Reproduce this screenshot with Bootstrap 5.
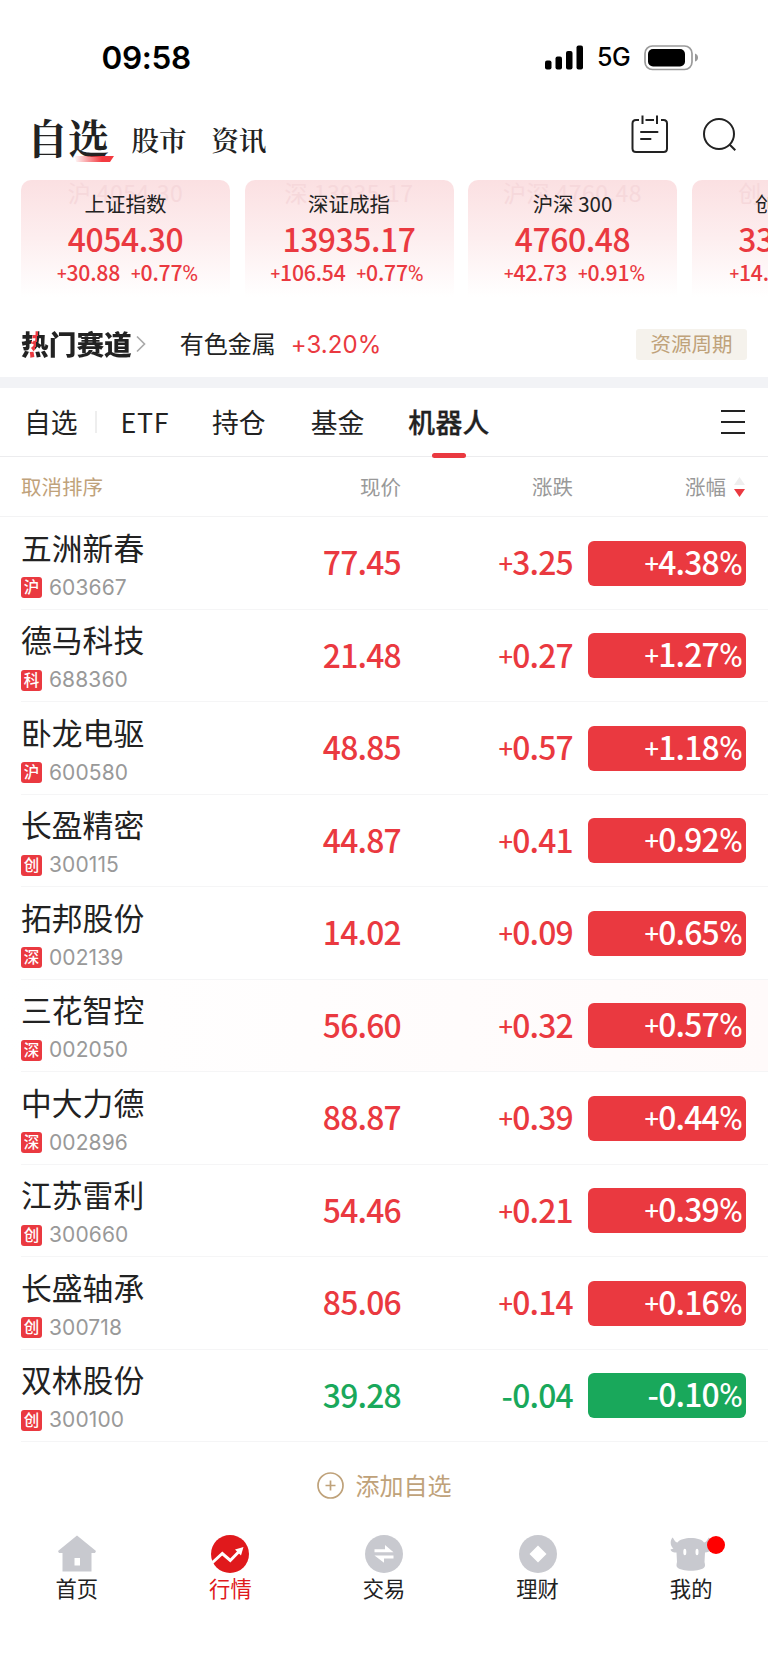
<!DOCTYPE html>
<html lang="zh-CN">
<head>
<meta charset="utf-8">
<meta name="viewport" content="width=device-width, initial-scale=1">
<title>自选行情</title>
<link href="https://cdn.jsdelivr.net/npm/bootstrap@5.3.0/dist/css/bootstrap.min.css" rel="stylesheet">
<style>
:root{--up:#ea3940;--down:#19a85b;--ink:#222;--gold:#bfa27a;--cjk:"Noto Sans CJK SC",sans-serif}
body{font-family:var(--cjk);color:var(--ink);width:768px;height:1669px;overflow:hidden;background:#fff}
.num{font-family:var(--cjk);font-weight:500}
.up{color:var(--up)}
.down{color:var(--down)}
.statusbar{height:100px;padding:15px 69px 0 101.5px;color:#000;font-family:Inter,var(--cjk)}
.clock{font-size:31.5px;font-weight:600;letter-spacing:-.3px}
.net{font-size:25px;font-weight:500;margin:1px 14px 0 13px;letter-spacing:-.6px}
.topnav{height:80px;padding:0 30.5px 0 27px;font-family:"Noto Serif CJK SC","Noto Sans CJK SC",serif}
.top-main{font-size:41px;font-weight:700;line-height:56px;margin-top:9px}
.top-sub{font-size:27.6px;font-weight:600;line-height:56px;margin-top:11px}
.swoosh{right:-5px;bottom:3px;width:40px;height:6px;background:linear-gradient(90deg,#fff0,#f33a40 70%);clip-path:polygon(0 0,100% 0,90% 100%,6% 100%)}
.indices{height:117px;padding-left:21px;gap:14.5px}
.index-card{flex:0 0 209px;height:117px;border-radius:10px 10px 0 0;background:linear-gradient(#fbe0e2,#fdeeef 50%,#fff);overflow:hidden}
.index-card .ghost{left:0;right:0;top:0;line-height:24px;font-size:23px;letter-spacing:.5px;color:#f6d8db}
.index-name{font-size:20.5px;line-height:24px;padding-top:11px;color:#222}
.index-value{font-size:31.8px;line-height:34px;margin-top:6px;letter-spacing:-.4px}
.index-change{font-size:21.2px;line-height:24px;margin-top:5px;gap:11px;letter-spacing:-.2px}
.pl{font-size:.8em;line-height:1;vertical-align:.07em}
.pc{font-family:Roboto,sans-serif;font-weight:400;font-size:1.02em;line-height:1}
.hotline{height:80px;padding:13px 21px 0 21px}
.hot-title{font-size:27.7px;font-weight:900;line-height:34px;margin-top:-1px;background:linear-gradient(100deg,#222 13px,var(--up) 13px,var(--up) 18px,#222 18px);-webkit-background-clip:text;background-clip:text;color:transparent}
.hot-name{font-size:24px;margin-left:34px;margin-top:-1px}
.hot-rise{font-family:Inter,sans-serif;font-size:24px;margin:2px 0 0 15px;letter-spacing:.1px}
.hot-tag{width:111px;height:31px;line-height:29px;font-size:20.5px;margin-top:1px;border-radius:3px;background:#f5f2ec;color:var(--gold)}
.divider-band{height:11px;background:#f2f3f6}
.tabs{height:69px;border-bottom:1px solid #ececee;font-size:26.8px;padding:0 23px 0 24px}
.tabs span{line-height:68px}
.tab-on{font-weight:500;letter-spacing:.4px;-webkit-text-stroke:.3px #222}
.tab-sep{width:2px;height:22px;background:#eee}
.tab-bar{left:24px;bottom:-2px;width:34px;height:5px;border-radius:3px;background:var(--up)}
.colhead,.stock{display:grid;grid-template-columns:200px 180px 172px 15px 158px;padding-left:21px;align-items:center}
.colhead{height:60px;border-bottom:1px solid #f3f3f4;font-size:20.5px;color:#999}
.gold{color:var(--gold)}
.stock{height:92.5px;position:relative}
.stock::after{content:"";position:absolute;left:21px;right:0;bottom:0;height:1px;background:#f5f5f6}
.stock.flash{background:linear-gradient(90deg,#fff,#fffafa)}
.stock-name{font-size:30.8px;line-height:36px;margin:2px 0 11px}
.mk{width:21px;height:21px;border-radius:3px;background:var(--up);color:#fff;font-size:15.5px;line-height:19px;text-align:center;font-weight:500}
.code{font-family:Inter,sans-serif;font-size:21px;line-height:24px;color:#999;margin-left:7px;letter-spacing:.1px}
.price,.chg,.pct{font-size:31.8px;line-height:44px;text-align:right;padding-bottom:4px;letter-spacing:-.75px}
.pct{grid-column:5;height:45px;border-radius:6px;background:var(--up);color:#fff;padding-right:4px;line-height:41px}
.pct.down{background:var(--down)}
.addrow{height:88px;font-size:24px;gap:12px;color:var(--gold);padding-bottom:2px}
.bottomnav{height:139px}
.bottomnav>div{width:153.6px;font-size:21.3px;line-height:30px;padding-top:4px}
.bottomnav svg{display:block;margin:0 auto -1px}
.dot{width:18px;height:18px;border-radius:50%;background:#f00;left:92.500px;top:6px}
</style>
</head>
<body>
<header class="statusbar d-flex align-items-center">
  <span class="clock">09:58</span>
  <svg class="ms-auto" width="39" height="26" viewBox="0 0 39 26"><rect x="0" y="15.500" width="6.500" height="9" rx="2"/><rect x="10.500" y="11.500" width="6.500" height="13" rx="2"/><rect x="21" y="6" width="6.500" height="18.500" rx="2"/><rect x="31.500" y="0.500" width="6.500" height="24" rx="2"/></svg>
  <span class="net">5G</span>
  <svg width="55" height="26" viewBox="0 0 55 26"><rect x="1" y="1" width="47" height="23.500" rx="7.500" fill="none" stroke="#9a9a9a" stroke-width="1.700"/><rect x="4" y="4" width="37" height="17.500" rx="5"/><path d="M51 8.500q3 1 3 4t-3 4z" fill="#999"/></svg>
</header>

<nav class="topnav d-flex align-items-start">
  <span class="top-main position-relative">自选<i class="swoosh position-absolute"></i></span>
  <span class="top-sub" style="margin-left:22.500px">股市</span>
  <span class="top-sub" style="margin-left:24.500px">资讯</span>
  <svg class="ms-auto" style="margin-top:14px" width="38" height="40" viewBox="0 0 38 40" fill="none" stroke="#222" stroke-width="2"><path d="M8 6H5q-3.500 0-3.500 3.500v25q0 3.500 3.500 3.500h27.500q3.500 0 3.500-3.500v-25Q36 6 32.500 6H30M14.500 6h8.500M11.500 1.500v8.500M26 1.500v8.500" /><path d="M10 18h16.500M10 25h9.500" stroke-linecap="round"/></svg>
  <svg style="margin:16px 0 0 33px" width="36" height="38" viewBox="0 0 36 38" fill="none" stroke="#222" stroke-width="2"><circle cx="17" cy="18" r="15"/><path d="M27.500 28.500l5.800 5.800"/></svg>
</nav>

<section class="indices d-flex overflow-hidden" id="indices"></section>

<section class="hotline d-flex align-items-center">
  <span class="hot-title">热门赛道</span>
  <svg style="margin-left:4px" width="10" height="18" viewBox="0 0 10 18" fill="none" stroke="#aaa" stroke-width="1.700"><path d="M1 1.500l7.500 7.500L1 16.500"/></svg>
  <span class="hot-name">有色金属</span><span class="hot-rise up">+3.20%</span>
  <span class="hot-tag ms-auto text-center">资源周期</span>
</section>
<div class="divider-band"></div>

<nav class="tabs d-flex align-items-center">
  <span>自选</span><i class="tab-sep" style="margin-left:17px"></i>
  <span style="margin-left:24px;letter-spacing:.6px">ETF</span>
  <span style="margin-left:43px">持仓</span>
  <span style="margin-left:45px">基金</span>
  <span class="tab-on position-relative" style="margin-left:44px">机器人<i class="tab-bar position-absolute"></i></span>
  <svg class="ms-auto" width="24" height="26" viewBox="0 0 24 26" stroke="#222" stroke-width="2"><path d="M0 2h24M0 13h24M0 24h24"/></svg>
</nav>

<div class="colhead">
  <span class="gold">取消排序</span><span class="text-end">现价</span><span class="text-end">涨跌</span><span></span>
  <span class="d-flex justify-content-end align-items-center">涨幅<svg style="margin:0 1px 0 8px" width="11" height="20" viewBox="0 0 11 20"><path d="M5.500 0L11 8H0z" fill="#eee"/><path d="M0 12h11l-5.500 8z" fill="#ea3940"/></svg></span>
</div>

<main id="stocks"></main>

<div class="addrow d-flex justify-content-center align-items-center">
  <svg width="27" height="27" viewBox="0 0 27 27" fill="none" stroke="#bfa27a" stroke-width="1.700"><circle cx="13.500" cy="13.500" r="12.500"/><path d="M8.500 13.500h10M13.500 8.500v10"/></svg><span>添加自选</span>
</div>

<nav class="bottomnav d-flex text-center">
  <div><svg width="38" height="40" viewBox="0 0 38 40"><path d="M19 1.500L38 17l-1 2h-3.500v18.500h-29V19H1l-1-2zM16.500 24v7.500h5.500V24z" fill="#c8c9cf" fill-rule="evenodd"/></svg>首页</div>
  <div style="color:#e0191c"><svg width="38" height="40" viewBox="0 0 38 40"><circle cx="19" cy="20" r="19" fill="#e0191c"/><path d="M1.500 28.500L11.300 19.500l8 7L28.500 17" fill="none" stroke="#fff" stroke-width="3"/><path d="M24 15.500l8.500-2.500-2.500 8.500z" fill="#fff"/></svg>行情</div>
  <div><svg width="38" height="40" viewBox="0 0 38 40"><circle cx="19" cy="20" r="19" fill="#c8c9cf"/><path d="M9.500 15.200h10.500v-4.200l8.500 7.200h-19zM28.500 24.500h-9.500v4.200l-9.500-7.200h19z" fill="#fff"/></svg>交易</div>
  <div><svg width="38" height="40" viewBox="0 0 38 40"><circle cx="19" cy="20" r="19" fill="#c8c9cf"/><path d="M19 11.500l8.500 8.500-8.500 8.500-8.500-8.500z" fill="#fff"/></svg>理财</div>
  <div class="position-relative"><svg width="42" height="40" viewBox="0 0 42 40"><path d="M2.500 3.500c1.500 1 2 4.500 5 5C11 2.500 31 2.500 34 8.500c3-.5 3.500-4 5-5 3 4 1 8-1.500 10l3 1c-.5 3-3 4-5.500 4l-.5 9.500q1 4 0 5C31 38 11 38 7 33q-1-1 0-5l-.5-9.500C4 18.500 1 18 .5 15.500l3-1C.5 12.500-.5 7.500 2.500 3.500z" fill="#c8c9cf"/><ellipse cx="14.800" cy="18" rx="1.500" ry="3.300" fill="#fff"/><ellipse cx="27" cy="18" rx="1.500" ry="3.300" fill="#fff"/></svg><i class="dot position-absolute"></i>我的</div>
</nav>
<script>
// Signs and percent marks are sized apart from the digits.
const fmt = s => s.replace('+', '<span class="pl">+</span>').replace('%', '<span class="pc">%</span>');

document.getElementById('indices').innerHTML = [
  ['上证指数', '沪', '4054.30', '+30.88', '+0.77%', 'ps-1'],
  ['深证成指', '深', '13935.17', '+106.54', '+0.77%', 'pe-1'],
  ['沪深 300', '沪深', '4760.48', '+42.73', '+0.91%', 'ps-1'],
  ['创业板指', '创', '3342.60', '+14.49', '+0.44%', 'ps-2']
].map(([name, mark, value, diff, pct, pad]) => `
  <div class="index-card position-relative text-center">
    <div class="ghost position-absolute">${mark} ${value}</div>
    <div class="index-name position-relative">${name}</div>
    <div class="index-value num up">${value}</div>
    <div class="index-change num up d-flex justify-content-center ${pad}"><span>${fmt(diff)}</span><span>${fmt(pct)}</span></div>
  </div>`).join('');

document.getElementById('stocks').innerHTML = [
  ['五洲新春', '沪', '603667', '77.45', '+3.25', '+4.38%'],
  ['德马科技', '科', '688360', '21.48', '+0.27', '+1.27%'],
  ['卧龙电驱', '沪', '600580', '48.85', '+0.57', '+1.18%'],
  ['长盈精密', '创', '300115', '44.87', '+0.41', '+0.92%'],
  ['拓邦股份', '深', '002139', '14.02', '+0.09', '+0.65%'],
  ['三花智控', '深', '002050', '56.60', '+0.32', '+0.57%', 'flash'],
  ['中大力德', '深', '002896', '88.87', '+0.39', '+0.44%'],
  ['江苏雷利', '创', '300660', '54.46', '+0.21', '+0.39%'],
  ['长盛轴承', '创', '300718', '85.06', '+0.14', '+0.16%'],
  ['双林股份', '创', '300100', '39.28', '-0.04', '-0.10%']
].map(([name, mark, code, price, diff, pct, extra = '']) => {
  const dir = diff[0] === '-' ? 'down' : 'up';
  return `
  <div class="stock ${extra}">
    <div><div class="stock-name">${name}</div>
      <div class="d-flex align-items-center"><span class="mk">${mark}</span><span class="code">${code}</span></div></div>
    <span class="price num ${dir}">${price}</span>
    <span class="chg num ${dir}">${fmt(diff)}</span>
    <span class="pct num ${dir} text-white">${fmt(pct)}</span>
  </div>`;
}).join('');
</script>
<script src="https://cdn.jsdelivr.net/npm/bootstrap@5.3.0/dist/js/bootstrap.bundle.min.js"></script>
</body>
</html>
